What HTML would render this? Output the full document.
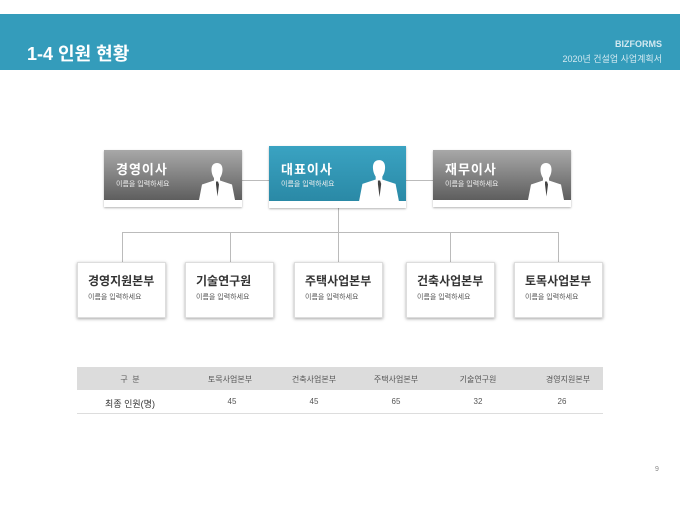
<!DOCTYPE html>
<html><head><meta charset="utf-8"><style>
body{margin:0;width:680px;height:510px;background:#fff;position:relative;overflow:hidden;font-family:"Liberation Sans","Noto Sans CJK KR",sans-serif}
.a{position:absolute}
.hdr{left:0;top:14px;width:680px;height:56px;background:#349cbb}
.tbox{position:absolute;height:57px;box-shadow:0 1px 2px rgba(0,0,0,.3);background:#fff}
.tbox .g{position:absolute;left:0;top:0;right:0;height:50px}
.tbox .t{position:absolute;left:12px;top:9px;color:#fff;font-weight:bold;font-size:13px;letter-spacing:1px}
.tbox .s{position:absolute;left:12px;top:29px;color:#eee;font-size:7px}
.tbox svg{position:absolute;right:6px;top:12px}
.bbox{position:absolute;top:262px;width:89px;height:56px;background:#fff;box-shadow:0 1px 3px rgba(0,0,0,.35);border:1px solid #ddd;box-sizing:border-box}
.bbox .t{position:absolute;left:10px;top:9px;font-weight:bold;font-size:12px;color:#333}
.bbox .s{position:absolute;left:10px;top:29px;font-size:7px;color:#555}
.ln{position:absolute;background:#bbb}
.c{position:absolute;font-size:8px;color:#555;text-align:center;width:80px}
</style></head><body>
<div class="a hdr"></div>
<div class="a" style="left:27px;top:40px;color:#fff;font-size:18px;font-weight:bold">1-4 인원 현황</div>
<div class="a" style="right:18px;top:39px;color:#d3e9f1;font-size:9px;font-weight:bold">BIZFORMS</div>
<div class="a" style="right:18px;top:52px;color:#d3e9f1;font-size:9px">2020년 건설업 사업계획서</div>

<div class="ln" style="left:242px;top:180px;width:191px;height:1px"></div>
<div class="ln" style="left:338px;top:207px;width:1px;height:25px"></div>
<div class="ln" style="left:122px;top:232px;width:437px;height:1px"></div>
<div class="ln" style="left:122px;top:232px;width:1px;height:30px"></div>
<div class="ln" style="left:230px;top:232px;width:1px;height:30px"></div>
<div class="ln" style="left:338px;top:232px;width:1px;height:30px"></div>
<div class="ln" style="left:450px;top:232px;width:1px;height:30px"></div>
<div class="ln" style="left:558px;top:232px;width:1px;height:30px"></div>

<svg width="0" height="0" style="position:absolute"><defs><g id="p"><path d="M18 1c3.5 0 5.5 2.5 5.5 6.5 0 3.5-1.2 6.5-2.5 8.5l0 2.5 12 4 3 15.5H0L3 22.5l12-4 0-2.5c-1.3-2-2.5-5-2.5-8.5 0-4 2-6.5 5.5-6.5z" fill="#fff"/><path d="M17 19.5h2l1 3-1.5 12-1.5-12z" fill="#444"/></g></defs></svg>

<div class="tbox" style="left:104px;top:150px;width:138px"><div class="g" style="background:linear-gradient(#a8a8a8,#5e5e5e)"></div><div class="t">경영이사</div><div class="s">이름을 입력하세요</div><svg width="38" height="38" viewBox="0 0 36 38"><use href="#p"/></svg></div>
<div class="tbox" style="left:269px;top:146px;width:137px;height:62px"><div class="g" style="height:55px;background:linear-gradient(#3aa3c2,#2a89a6)"></div><div class="t" style="top:13px">대표이사</div><div class="s" style="top:33px">이름을 입력하세요</div><svg width="42" height="42" viewBox="0 0 36 38" style="top:13px"><use href="#p"/></svg></div>
<div class="tbox" style="left:433px;top:150px;width:138px"><div class="g" style="background:linear-gradient(#a8a8a8,#5e5e5e)"></div><div class="t">재무이사</div><div class="s">이름을 입력하세요</div><svg width="38" height="38" viewBox="0 0 36 38"><use href="#p"/></svg></div>

<div class="bbox" style="left:77px"><div class="t">경영지원본부</div><div class="s">이름을 입력하세요</div></div>
<div class="bbox" style="left:185px"><div class="t">기술연구원</div><div class="s">이름을 입력하세요</div></div>
<div class="bbox" style="left:294px"><div class="t">주택사업본부</div><div class="s">이름을 입력하세요</div></div>
<div class="bbox" style="left:406px"><div class="t">건축사업본부</div><div class="s">이름을 입력하세요</div></div>
<div class="bbox" style="left:514px"><div class="t">토목사업본부</div><div class="s">이름을 입력하세요</div></div>

<div class="a" style="left:77px;top:367px;width:526px;height:23px;background:#dcdcdc"></div>
<div class="a" style="left:77px;top:413px;width:526px;height:1px;background:#ddd"></div>
<div class="c" style="left:90px;top:374px">구 &nbsp;분</div>
<div class="c" style="left:190px;top:374px">토목사업본부</div>
<div class="c" style="left:274px;top:374px">건축사업본부</div>
<div class="c" style="left:356px;top:374px">주택사업본부</div>
<div class="c" style="left:438px;top:374px">기술연구원</div>
<div class="c" style="left:528px;top:374px">경영지원본부</div>
<div class="c" style="left:90px;top:397px;font-size:9px;color:#333">최종 인원(명)</div>
<div class="c" style="left:192px;top:397px">45</div>
<div class="c" style="left:274px;top:397px">45</div>
<div class="c" style="left:356px;top:397px">65</div>
<div class="c" style="left:438px;top:397px">32</div>
<div class="c" style="left:522px;top:397px">26</div>
<div class="a" style="left:655px;top:466px;font-size:7px;color:#888">9</div>
</body></html>
